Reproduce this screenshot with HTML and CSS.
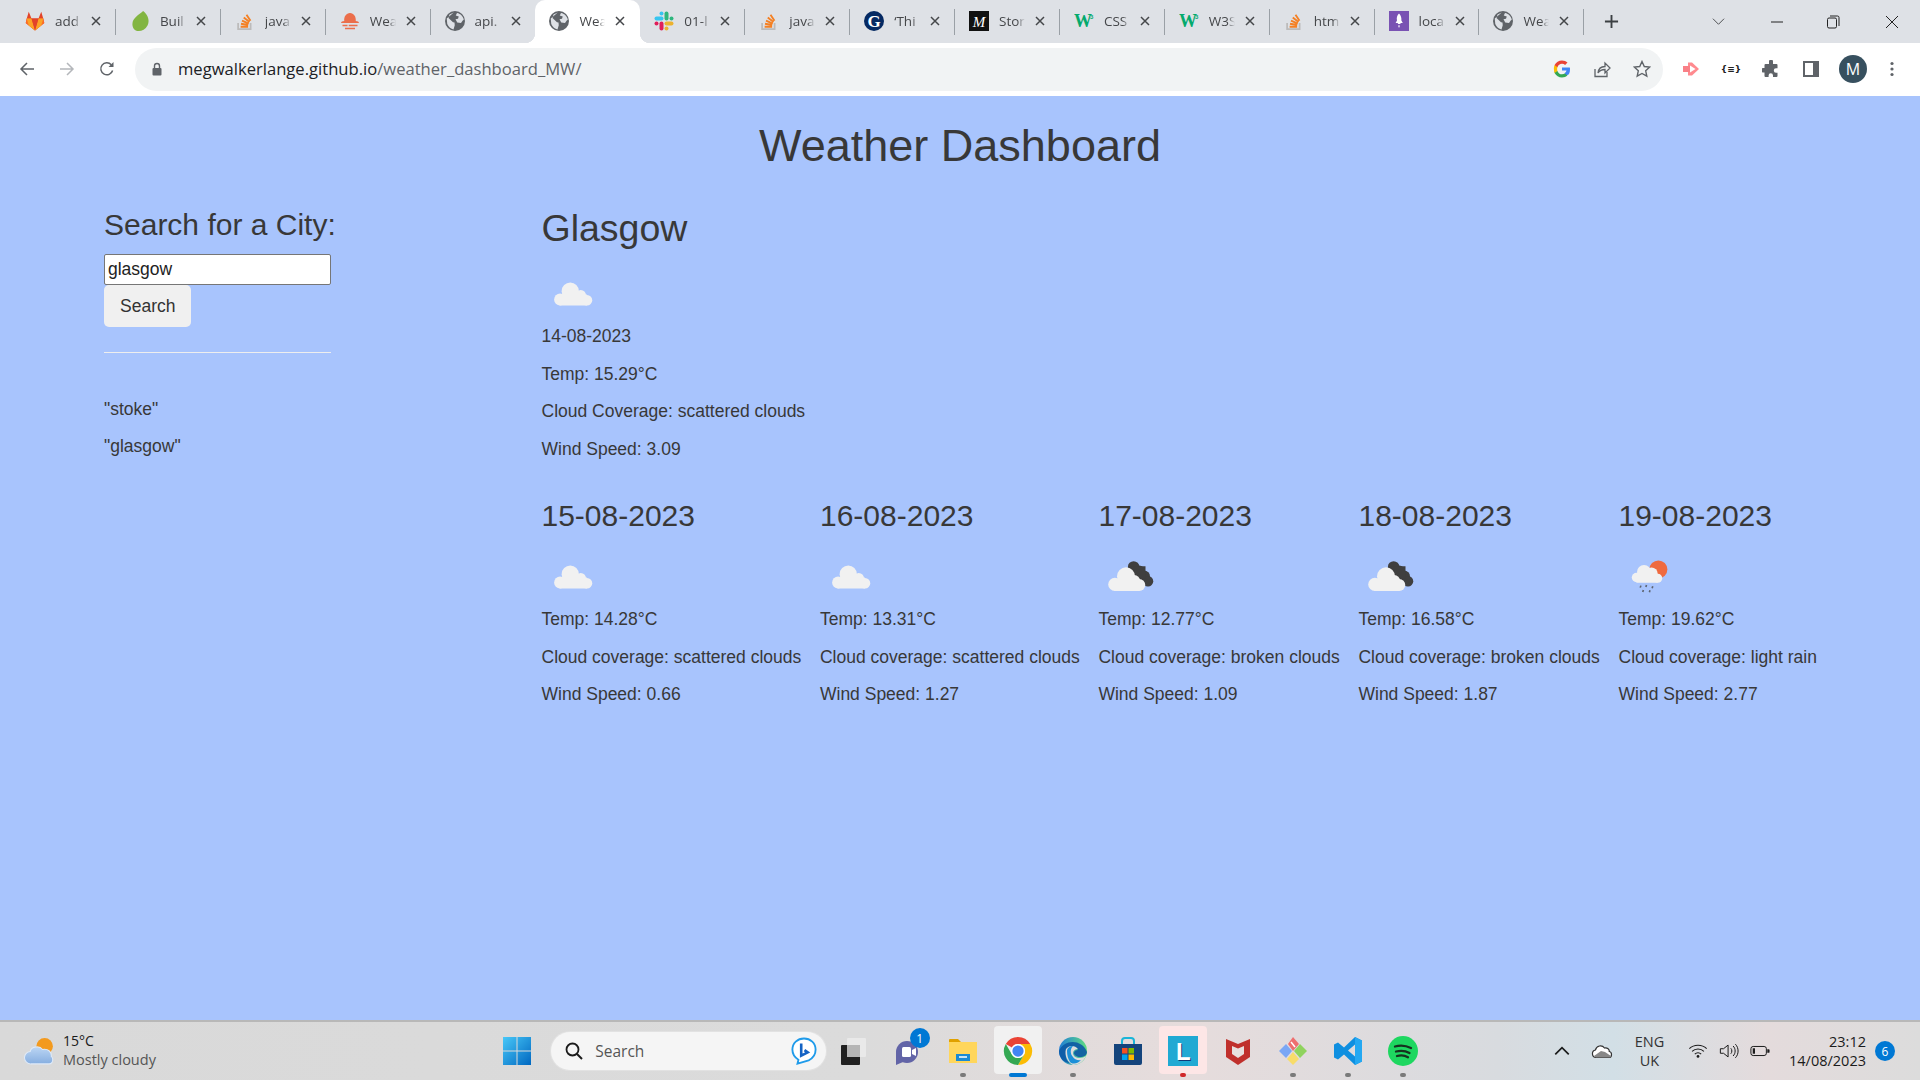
FILE: index.html
```html
<!DOCTYPE html>
<html lang="en">
<head>
  <meta charset="UTF-8">
  <title>Weather Dashboard</title>
  <link rel="stylesheet" href="styles.css">
</head>
<body>

  <!-- shared icons -->
  <svg class="defs" width="0" height="0">
    <symbol id="globe" viewBox="0 0 16 16">
      <circle cx="8" cy="8" r="8" fill="#5f6368"/>
      <path d="M7 1.2 3.6 2.8 2.8 5.6 6.4 9l1.2 .2 .2 2.2 -1 3.4c-2-.4-4-2-5-4.4L1.4 6zM9.6 1.6l-1 2 2.4 .8 -.6 1.8 -2 .4 1.4 2.6 3 .4 1.4-2 .8-.6C14.6 4.4 12.6 2.2 9.6 1.6z" fill="#dee1e6"/>
    </symbol>
    <symbol id="so" viewBox="0 0 16 16">
      <path d="M2.5 9.5v5h10v-5" fill="none" stroke="#bcbbbb" stroke-width="1.4"/>
      <path d="M4.5 12.6h6M4.8 10.2l5.8 1M5.6 7.7l5.4 2.4M7 5.2l4.6 3.6M9.2 3l3.2 4.8" fill="none" stroke="#f48024" stroke-width="1.5"/>
    </symbol>
    <symbol id="close" viewBox="0 0 10 10">
      <path d="M1 1l8 8M9 1l-8 8" stroke="#45474a" stroke-width="1.5" fill="none"/>
    </symbol>
    <symbol id="cloud" viewBox="0 0 50 50">
      <g fill="#f1f1f1">
        <circle cx="22.6" cy="23.3" r="6.9"/>
        <circle cx="31" cy="26.5" r="4.2"/>
        <circle cx="14.5" cy="30" r="4.8"/>
        <circle cx="36" cy="30.6" r="4.2"/>
        <rect x="14" y="26" width="22" height="8.8"/>
      </g>
    </symbol>
    <symbol id="broken" viewBox="0 0 50 50">
      <g fill="#3f3f3f">
        <circle cx="28.5" cy="17.5" r="4.6"/>
        <circle cx="33" cy="21" r="4.6"/>
        <circle cx="37" cy="25" r="4.6"/>
        <circle cx="40" cy="29" r="4.2"/>
        <rect x="26" y="17" width="12" height="10"/>
      </g>
      <g fill="#f1f1f1">
        <circle cx="22.4" cy="25" r="7.2"/>
        <circle cx="29" cy="28.6" r="4.6"/>
        <circle cx="13.5" cy="31.5" r="5.3"/>
        <circle cx="33" cy="32" r="4.8"/>
        <rect x="13" y="28" width="20" height="8.8"/>
      </g>
    </symbol>
    <symbol id="rain" viewBox="0 0 50 50">
      <circle cx="31.5" cy="19.5" r="7.2" fill="#ef6a3f"/>
      <g fill="#f1f1f1">
        <circle cx="20" cy="21.5" r="5.6"/>
        <circle cx="26" cy="23" r="5"/>
        <circle cx="14" cy="26" r="3.8"/>
        <circle cx="31" cy="26.6" r="3.6"/>
        <rect x="14" y="24" width="17" height="6.2"/>
      </g>
      <path d="M17.5 32.5l-.5 1.6M22 32l-.5 1.6M27 33l-.5 1.6M19.5 36l-.5 1.6M24.8 36.2l-.5 1.6" stroke="#5d6470" stroke-width="1.3" fill="none"/>
    </symbol>
  </svg>

  <div class="tabstrip">
    <div class="tab">
      <svg class="fav" viewBox="0 0 16 16"><path d="M8 15.5 .6 9.6 1.4 6 3 .6 5.2 6h5.6L13 .6 14.6 6l.8 3.6z" fill="#e24329"/><path d="M8 15.5 .6 9.6 1.4 6 5.2 6zM8 15.5l7.4-5.9L14.6 6l-3.8 0z" fill="#fc6d26"/><path d="M8 15.5 3 11.5 1.4 6 5.2 6zM8 15.5l5-4L14.6 6l-3.8 0z" fill="#fca326"/><path d="M8 15.5 5.2 6h5.6z" fill="#e24329"/></svg>
      <span class="tab-title">add</span><svg class="x"><use href="#close"/></svg>
    </div>
    <div class="tab">
      <svg class="fav" viewBox="0 0 16 16"><path d="M10.500 0c4 3 5.500 8 3.500 11.500-1.500 3-4.500 4.500-7 4.500-3.500 0-5.500-3-5-6.500C2.500 5.500 7 3 10.500 0z" fill="#82b541"/></svg>
      <span class="tab-title">Buil</span><svg class="x"><use href="#close"/></svg>
    </div>
    <div class="tab">
      <svg class="fav"><use href="#so"/></svg>
      <span class="tab-title">java</span><svg class="x"><use href="#close"/></svg>
    </div>
    <div class="tab">
      <svg class="fav" viewBox="0 0 16 16"><path d="M3.400 8C3 4.600 5 1.600 8 1.600s5 3 4.600 6.400c1.400 0 2.600 .6 2.600 1.600H.8c0-1 1.200-1.600 2.600-1.600zM2 11h4v1.200H2zM7 11h7v1.200H7zM4 13.400h8v1.200H4z" fill="#eb6e4b"/></svg>
      <span class="tab-title">Wea</span><svg class="x"><use href="#close"/></svg>
    </div>
    <div class="tab before-active">
      <svg class="fav"><use href="#globe"/></svg>
      <span class="tab-title">api.</span><svg class="x"><use href="#close"/></svg>
    </div>
    <div class="tab active">
      <svg class="fav"><use href="#globe"/></svg>
      <span class="tab-title">Wea</span><svg class="x"><use href="#close"/></svg>
    </div>
    <div class="tab">
      <svg class="fav" viewBox="0 0 16 16" fill="none" stroke-width="3.200" stroke-linecap="round"><path d="M6 6H2" stroke="#36c5f0"/><path d="M6 2v0" stroke="#36c5f0"/><path d="M10 6V2" stroke="#2eb67d"/><path d="M14 6v0" stroke="#2eb67d"/><path d="M10 10h4" stroke="#ecb22e"/><path d="M10 14v0" stroke="#ecb22e"/><path d="M6 10v4" stroke="#e01e5a"/><path d="M2 10v0" stroke="#e01e5a"/></svg>
      <span class="tab-title">01-l</span><svg class="x"><use href="#close"/></svg>
    </div>
    <div class="tab">
      <svg class="fav"><use href="#so"/></svg>
      <span class="tab-title">java</span><svg class="x"><use href="#close"/></svg>
    </div>
    <div class="tab">
      <svg class="fav" viewBox="0 0 20 20"><circle cx="10" cy="10" r="10" fill="#052962"/><text x="10" y="16" class="guardian-g">G</text></svg>
      <span class="tab-title">‘Thi</span><svg class="x"><use href="#close"/></svg>
    </div>
    <div class="tab">
      <svg class="fav" viewBox="0 0 20 20"><rect width="20" height="20" fill="#111"/><text x="10" y="15.500" class="medium-m">M</text></svg>
      <span class="tab-title">Stor</span><svg class="x"><use href="#close"/></svg>
    </div>
    <div class="tab">
      <svg class="fav" viewBox="0 0 20 16"><text x="0" y="14" class="w3-w">W</text><text x="16" y="6" class="w3-3">3</text></svg>
      <span class="tab-title">CSS</span><svg class="x"><use href="#close"/></svg>
    </div>
    <div class="tab">
      <svg class="fav" viewBox="0 0 20 16"><text x="0" y="14" class="w3-w">W</text><text x="16" y="6" class="w3-3">3</text></svg>
      <span class="tab-title">W3S</span><svg class="x"><use href="#close"/></svg>
    </div>
    <div class="tab">
      <svg class="fav"><use href="#so"/></svg>
      <span class="tab-title">htm</span><svg class="x"><use href="#close"/></svg>
    </div>
    <div class="tab">
      <svg class="fav" viewBox="0 0 20 20"><rect width="20" height="20" fill="#7952b3"/><path d="M10 2.500c2 1.800 2.600 4.400 2.400 7l1.400 2.400-2 0-.6 1H9.200l-.6-1-2 0L8 9.500C7.400 6.900 8 4.300 10 2.500z" fill="#fff"/><path d="M9 14.500h2l-1 2.600z" fill="#fff"/></svg>
      <span class="tab-title">loca</span><svg class="x"><use href="#close"/></svg>
    </div>
    <div class="tab">
      <svg class="fav"><use href="#globe"/></svg>
      <span class="tab-title">Wea</span><svg class="x"><use href="#close"/></svg>
    </div>
    <svg class="newtab" viewBox="0 0 16 16"><path d="M8 1v14M1 8h14" stroke="#3c4043" stroke-width="2" fill="none"/></svg>
    <div class="win-controls">
      <svg class="win-btn chevron" viewBox="0 0 14 14"><path d="M1 4l6 6 6-6" stroke="#45474a" fill="none"/></svg>
      <svg class="win-btn" viewBox="0 0 14 14"><path d="M1 7h12" stroke="#222" fill="none"/></svg>
      <svg class="win-btn" viewBox="0 0 14 14"><rect x="1.500" y="3" width="9" height="10" rx="1.500" stroke="#222" fill="none"/><path d="M4 1h7.500a1.500 1.500 0 0 1 1.500 1.500V11" stroke="#222" fill="none"/></svg>
      <svg class="win-btn win-close" viewBox="0 0 14 14"><path d="M1 1l12 12M13 1 1 13" stroke="#222" fill="none"/></svg>
    </div>
  </div>

  <div class="toolbar">
    <svg class="tool" viewBox="0 0 16 16"><path d="M15 8H2M8 2 2 8l6 6" stroke="#5f6368" stroke-width="1.500" fill="none"/></svg>
    <svg class="tool" viewBox="0 0 16 16"><path d="M1 8h13M8 2l6 6-6 6" stroke="#b4b7bb" stroke-width="1.500" fill="none"/></svg>
    <svg class="tool" viewBox="0 0 16 16"><path d="M13.600 9.500A6 6 0 1 1 12.300 3.800" stroke="#5f6368" stroke-width="1.500" fill="none"/><path d="M14.500 1v5h-5z" fill="#5f6368"/></svg>
    <div class="omnibox">
      <svg class="lock" viewBox="0 0 12 14"><path d="M3.500 6V4a2.500 2.500 0 0 1 5 0v2" stroke="#5f6368" stroke-width="1.400" fill="none"/><rect x="1.500" y="6" width="9" height="7.500" rx="1" fill="#5f6368"/></svg>
      <span class="url"><span class="host">megwalkerlange.github.io</span>/weather_dashboard_MW/</span>
      <svg class="omni-icon google" viewBox="0 0 18 18"><path d="M17 9.200c0-.6 0-1.100-.2-1.600H9v3h4.500c-.2 1-.8 1.900-1.700 2.500v2h2.700C16.100 14.700 17 12.200 17 9.200z" fill="#4285f4"/><path d="M9 17.500c2.200 0 4.100-.7 5.500-2l-2.700-2c-.8 .5-1.700 .8-2.800 .8-2.100 0-3.900-1.400-4.600-3.400H1.600V13C3 15.700 5.800 17.500 9 17.500z" fill="#34a853"/><path d="M4.400 10.900c-.4-1.200-.4-2.500 0-3.700V5H1.600c-1 2.100-1 4.800 0 8z" fill="#fbbc05"/><path d="M9 3.700c1.200 0 2.300 .4 3.100 1.200l2.400-2.400C13.100 1.200 11.200 .5 9 .5 5.800 .5 3 2.300 1.600 5l2.800 2.200C5.100 5.100 6.900 3.700 9 3.700z" fill="#ea4335"/></svg>
      <svg class="omni-icon" viewBox="0 0 18 18"><path d="M2 9v7.500h12V12" stroke="#5f6368" stroke-width="1.300" fill="none"/><path d="M5 13c.4-4 3.200-6.400 7-6.500V3l5 5-5 5V9.500c-3 0-5.400 1-7 3.500z" stroke="#5f6368" stroke-width="1.300" fill="none"/></svg>
      <svg class="omni-icon" viewBox="0 0 18 18"><path d="M9 1.500l2.300 5 5.400 .6-4 3.700 1.100 5.400L9 13.500l-4.800 2.700 1.100-5.400-4-3.700 5.400-.6z" stroke="#5f6368" stroke-width="1.400" fill="none"/></svg>
    </div>
    <div class="ext-icons">
      <svg class="ext" viewBox="0 0 18 18"><path d="M6 2.500h4L17 9l-7 6.500H6z" fill="#ff8a8f"/><path d="M8 5.500 13.500 9 8 12.500z" fill="#fff"/><rect x="1" y="6" width="7" height="6" fill="#f98087"/></svg>
      <span class="ext ext-code">{≡}</span>
      <svg class="ext" viewBox="0 0 18 18"><path d="M7 1.500a2 2 0 0 1 4 0V4h3.500a1 1 0 0 1 1 1v3.300H14a2.200 2.200 0 0 0 0 4.400h1.500V16a1 1 0 0 1-1 1H11v-1.500a2.200 2.200 0 0 0-4.400 0V17H3.500a1 1 0 0 1-1-1v-3.500H1a2.200 2.200 0 0 1 0-4.400h1.500V5a1 1 0 0 1 1-1H7z" fill="#5f6368"/></svg>
      <svg class="ext" viewBox="0 0 18 18"><path d="M1 1h16v16H1zM3 3v12h8V3z" fill="#5f6368" fill-rule="evenodd"/></svg>
      <span class="avatar">M</span>
      <svg class="ext" viewBox="0 0 18 18"><g fill="#5f6368"><circle cx="9" cy="3.500" r="1.600"/><circle cx="9" cy="9" r="1.600"/><circle cx="9" cy="14.500" r="1.600"/></g></svg>
    </div>
  </div>

  <main class="page">
    <h1 class="page-title">Weather Dashboard</h1>
    <div class="row">
      <aside class="sidebar">
        <h3>Search for a City:</h3>
        <input class="city-input" type="text" value="glasgow">
        <button class="search-btn">Search</button>
        <hr>
        <div class="history">
          <p>"stoke"</p>
          <p>"glasgow"</p>
        </div>
      </aside>
      <section class="results">
        <h2>Glasgow</h2>
        <svg class="wx"><use href="#cloud"/></svg>
        <p>14-08-2023</p>
        <p>Temp: 15.29°C</p>
        <p>Cloud Coverage: scattered clouds</p>
        <p>Wind Speed: 3.09</p>
        <div class="forecast">
          <div class="day">
            <h3>15-08-2023</h3>
            <svg class="wx"><use href="#cloud"/></svg>
            <p>Temp: 14.28°C</p>
            <p>Cloud coverage: scattered clouds</p>
            <p>Wind Speed: 0.66</p>
          </div>
          <div class="day">
            <h3>16-08-2023</h3>
            <svg class="wx"><use href="#cloud"/></svg>
            <p>Temp: 13.31°C</p>
            <p>Cloud coverage: scattered clouds</p>
            <p>Wind Speed: 1.27</p>
          </div>
          <div class="day">
            <h3>17-08-2023</h3>
            <svg class="wx"><use href="#broken"/></svg>
            <p>Temp: 12.77°C</p>
            <p>Cloud coverage: broken clouds</p>
            <p>Wind Speed: 1.09</p>
          </div>
          <div class="day">
            <h3>18-08-2023</h3>
            <svg class="wx"><use href="#broken"/></svg>
            <p>Temp: 16.58°C</p>
            <p>Cloud coverage: broken clouds</p>
            <p>Wind Speed: 1.87</p>
          </div>
          <div class="day">
            <h3>19-08-2023</h3>
            <svg class="wx"><use href="#rain"/></svg>
            <p>Temp: 19.62°C</p>
            <p>Cloud coverage: light rain</p>
            <p>Wind Speed: 2.77</p>
          </div>
        </div>
      </section>
    </div>
  </main>

  <footer class="taskbar">
    <div class="tb-weather">
      <svg class="tb-weather-icon" viewBox="0 0 32 28">
        <defs>
          <linearGradient id="cloudGrad" x1="0" y1="0" x2="0" y2="1"><stop offset="0" stop-color="#bcd6f4"/><stop offset="1" stop-color="#86aee0"/></linearGradient>
        </defs>
        <circle cx="20" cy="9" r="8" fill="#f39a1e"/>
        <path d="M7 26a6 6 0 0 1-1-12c1-5 9-6 12-2 5-1 9 2 8.500 7 2 1 2 7-2 7z" fill="url(#cloudGrad)" stroke="#dfeaf8"/>
      </svg>
      <div>
        <div class="tb-temp">15°C</div>
        <div class="tb-cond">Mostly cloudy</div>
      </div>
    </div>

    <div class="tb-center">
      <div class="app app-start">
        <svg class="app-icon" viewBox="0 0 30 30">
          <defs><linearGradient id="winGrad" x1="0" y1="0" x2="1" y2="1"><stop offset="0" stop-color="#48c8f8"/><stop offset="1" stop-color="#0067c0"/></linearGradient></defs>
          <path d="M1 1h13.500v13.500H1zM15.500 1H29v13.500H15.500zM1 15.500h13.500V29H1zM15.500 15.500H29V29H15.500z" fill="url(#winGrad)"/>
        </svg>
      </div>
      <div class="tb-search">
        <svg class="tb-search-icon" viewBox="0 0 18 18"><circle cx="7.500" cy="7.500" r="6" stroke="#1b1b1b" stroke-width="1.800" fill="none"/><path d="M12 12l5 5" stroke="#1b1b1b" stroke-width="2"/></svg>
        <span class="tb-search-text">Search</span>
        <svg class="tb-bing" viewBox="0 0 28 30"><path d="M14 1.500c7 0 12.500 5 12.500 12 0 5-3 9.500-7.500 11.500l-12 3.500 1-4C4 22 1.500 18 1.500 13.500 1.500 6.500 7 1.500 14 1.500z" fill="#fff" stroke="#1f9bea" stroke-width="2"/><path d="M11 7v13l7-3.500-3.500-2.500" fill="none" stroke="#1463c4" stroke-width="2.800"/></svg>
      </div>
      <div class="app">
        <svg class="app-icon" viewBox="0 0 30 30"><rect x="3" y="9" width="19" height="20" rx="1" fill="#202020"/><rect x="9" y="2" width="19" height="19" rx="1" fill="#e9e9e9"/><rect x="9" y="9" width="13" height="12" fill="#b5b5b5"/></svg>
      </div>
      <div class="app">
        <svg class="app-icon" viewBox="0 0 30 30"><circle cx="14" cy="16" r="11" fill="#6264a7"/><path d="M3 16v13l7-3z" fill="#6264a7"/><rect x="9" y="11" width="9" height="10" rx="1.500" fill="#fff"/><path d="M19 14l4-2v8l-4-2z" fill="#fff"/></svg>
        <span class="badge teams-badge">1</span>
      </div>
      <div class="app">
        <svg class="app-icon" viewBox="0 0 30 30"><path d="M1 4a1 1 0 0 1 1-1h8l3 3h-12z" fill="#e0a100"/><path d="M1 6h28v21H1z" fill="#ffd65c"/><path d="M8 18h14v7H8z" fill="#1a8ad4"/><path d="M11 21h8" stroke="#fff" stroke-width="1.500"/></svg>
        <span class="dot"></span>
      </div>
      <div class="app">
        <span class="tile tile-grey"></span>
        <svg class="app-icon" viewBox="0 0 32 32"><path d="M3 8.500A15 15 0 0 1 29 8.500L16 8.500A7.500 7.500 0 0 0 9.500 12.200z" fill="#ea4335"/><path d="M29 8.500A15 15 0 0 1 16 31L22.500 19.750A7.500 7.500 0 0 0 16 8.500z" fill="#fbbc05"/><path d="M16 31A15 15 0 0 1 3 8.500L9.500 19.750A7.500 7.500 0 0 0 22.500 19.750z" fill="#34a853"/><circle cx="16" cy="16" r="7.500" fill="#fff"/><circle cx="16" cy="16" r="6" fill="#4285f4"/></svg>
        <span class="dot dot-long"></span>
      </div>
      <div class="app">
        <svg class="app-icon" viewBox="0 0 30 30">
          <defs><linearGradient id="edgeGrad" x1="0" y1="0" x2="1" y2="0"><stop offset="0" stop-color="#1f7fd8"/><stop offset="1" stop-color="#5fdc80"/></linearGradient></defs>
          <circle cx="15" cy="15" r="14" fill="url(#edgeGrad)"/>
          <path d="M29 16c0 3-3 5-7 5-3 0-6-2-6-4s2-3 4-3c-2-3-8-3-11 1-2 3-2 9 3 12C6 27 1 22 1 15 6 3 24 3 29 16z" fill="#0c59a4" opacity=".9"/>
          <path d="M8 13c3-4 9-4 12 0-3 0-5 2-5 4 0 3 3 5 7 5 2 0 4-1 6-2-2 5-7 9-13 9-5-2-9-10-7-16z" fill="#dcdcdc"/>
          <path d="M9 15c0-3 3-5 6-5-3 3-3 8 0 11 1 2 5 4 8 3-2 3-8 5-11 2-2-3-3-7-3-11z" fill="#1b8fd8"/>
        </svg>
        <span class="dot"></span>
      </div>
      <div class="app">
        <svg class="app-icon" viewBox="0 0 30 30"><path d="M9 9V5a3 3 0 0 1 3-3h6a3 3 0 0 1 3 3v4" stroke="#19b5d8" stroke-width="2" fill="none"/><path d="M1 8h28v19a2 2 0 0 1-2 2H3a2 2 0 0 1-2-2z" fill="#14447c"/><rect x="9" y="12" width="5.500" height="5.500" fill="#f25022"/><rect x="15.500" y="12" width="5.500" height="5.500" fill="#7fba00"/><rect x="9" y="18.500" width="5.500" height="5.500" fill="#00a4ef"/><rect x="15.500" y="18.500" width="5.500" height="5.500" fill="#ffb900"/></svg>
      </div>
      <div class="app">
        <span class="tile tile-pink"></span>
        <svg class="app-icon" viewBox="0 0 30 30"><rect width="30" height="30" fill="#21a9d3"/><text x="9" y="25" class="l-shadow">L</text><text x="8" y="24" class="l-letter">L</text></svg>
        <span class="dot dot-red"></span>
      </div>
      <div class="app">
        <svg class="app-icon" viewBox="0 0 30 30"><path d="M3 3l12 5 12-5v18l-12 8-12-8z" fill="#c0302c"/><path d="M9 10l6 2.500 6-2.500v8l-6 4-6-4z" fill="#e8e0de"/></svg>
      </div>
      <div class="app">
        <svg class="app-icon" viewBox="0 0 30 30"><path d="M15 1l6 7-6 7-5-7z" fill="#ee6f6f"/><path d="M8 8l6 7-6 7-7-7z" fill="#7aa7f5"/><path d="M22 8l7 7-7 7-6-7z" fill="#90d35e"/><path d="M15 16l6 7-6 6-6-6z" fill="#f8dc6a"/><path d="M13 6l4 5" stroke="#fff" stroke-width="1.500"/></svg>
        <span class="dot"></span>
      </div>
      <div class="app">
        <svg class="app-icon" viewBox="0 0 30 30"><path d="M22 1l7 3.500v21L22 29 11 18.500l-6 5L1 21.500v-13L5 6.500l6 5zM22 8.500l-7 6 7 6z" fill="#0f8fe0" fill-rule="evenodd"/><path d="M22 1l7 3.500v21L22 29z" fill="#24a8f2"/></svg>
        <span class="dot"></span>
      </div>
      <div class="app">
        <svg class="app-icon" viewBox="0 0 30 30"><circle cx="15" cy="15" r="15" fill="#1ed760"/><path d="M7 10.500c5-1.500 11-1 16 1.500M8 15.500c4.500-1.200 9.500-.8 13.500 1.500M9 20c3.500-1 8-.6 11 1.200" stroke="#16321f" stroke-width="2.300" stroke-linecap="round" fill="none"/></svg>
        <span class="dot"></span>
      </div>
    </div>

    <div class="tb-tray">
      <svg class="tray-icon tray-up" viewBox="0 0 16 16"><path d="M2 11l6-6 6 6" stroke="#1b1b1b" stroke-width="1.500" fill="none"/></svg>
      <svg class="tray-icon tray-drive" viewBox="0 0 22 16"><path d="M5 14.500a3.800 3.800 0 0 1-.6-7.500C5.500 2.500 11 1.500 13.500 5c3-.5 5 1.500 4.800 3.500 3 .5 3 6 -.3 6z" fill="#fff" stroke="#333" stroke-width="1.200"/><path d="M3 13l7-5 4 1 6 4-1 1.500H5z" fill="#888"/></svg>
      <div class="tray-lang">ENG<br>UK</div>
      <svg class="tray-icon" viewBox="0 0 22 18"><path d="M1.500 6.500c5-5 14-5 19 0M4.500 9.500c3.500-3.500 9.500-3.500 13 0M7.500 12.500c2-2 5-2 7 0" stroke="#1b1b1b" stroke-width="1.200" fill="none"/><circle cx="11" cy="15" r="1.500" fill="#1b1b1b"/></svg>
      <svg class="tray-icon" viewBox="0 0 22 18"><path d="M1.500 6.500h3.500L10 2.500v13L5 11.500H1.500z" stroke="#1b1b1b" stroke-width="1.100" fill="none"/><path d="M13 6c1.500 1.500 1.500 4.500 0 6M15.500 3.500c3 3 3 8 0 11M18 1.500c4 4 4 11 0 15" stroke="#1b1b1b" stroke-width="1.100" fill="none"/></svg>
      <svg class="tray-icon" viewBox="0 0 22 14"><rect x="1" y="2" width="17" height="10" rx="2.500" stroke="#1b1b1b" stroke-width="1.100" fill="none"/><rect x="3" y="4" width="2.500" height="6" fill="#1b1b1b"/><path d="M19 5h1.500a1 1 0 0 1 1 1v2a1 1 0 0 1-1 1H19z" fill="#1b1b1b"/></svg>
      <div class="tray-clock">23:12<br>14/08/2023</div>
      <span class="badge notif-badge">6</span>
    </div>
  </footer>

</body>
</html>
```

FILE: styles.css
```css
* { box-sizing: border-box; }
html, body { height: 100%; }
body { margin: 0; display: flex; flex-direction: column; height: 1080px; overflow: hidden; font-family: "Liberation Sans", Arial, sans-serif; font-size: 17.5px; line-height: 25px; color: #383838; background: #a8c4fd; }
.defs { position: absolute; }

/* browser tabs */
.tabstrip { display: flex; align-items: center; height: 43px; padding-left: 11px; background: #dee1e6; flex: none; }
.tab { position: relative; display: flex; align-items: center; width: 104.9px; height: 43px; padding: 0 0 2px 14px; flex: none; background: linear-gradient(#9aa0a6, #9aa0a6) right 9px / 1px 26px no-repeat; }
.tab.before-active { background: none; }
.tab.active { background: #fff; border-radius: 10px 10px 0 0; }
.tab.active::before, .tab.active::after { content: ""; position: absolute; bottom: 0; width: 10px; height: 10px; }
.tab.active::before { left: -10px; background: radial-gradient(circle at 0 0, #dee1e6 10px, #fff 10.5px); }
.tab.active::after { right: -10px; background: radial-gradient(circle at 100% 0, #dee1e6 10px, #fff 10.5px); }
.fav { width: 20px; height: 20px; flex: none; }
.tab-title { width: 26px; margin-left: 10px; white-space: nowrap; font: 13.5px/18px "Open Sans", sans-serif; color: #45474a; -webkit-mask-image: linear-gradient(90deg, #000 70%, transparent); mask-image: linear-gradient(90deg, #000 70%, transparent); }
.x { width: 10px; height: 10px; margin-left: 10px; flex: none; }
.w3-w { font: bold 18px "Liberation Serif", serif; fill: #04aa6d; }
.w3-3 { font: bold 6px "Liberation Sans", sans-serif; fill: #04aa6d; }
.guardian-g { font: bold 17px "Liberation Serif", serif; fill: #fff; text-anchor: middle; }
.medium-m { font: italic 15px "Liberation Serif", serif; fill: #fff; text-anchor: middle; }
.newtab { width: 15px; height: 15px; margin-left: 20px; flex: none; }
.win-controls { display: flex; align-items: center; margin-left: auto; padding-right: 21px; }
.win-btn { width: 14px; height: 14px; margin-left: 42px; }
.win-btn.win-close { margin-left: 45px; }
.win-btn.chevron { margin-left: 0; width: 13px; height: 13px; margin-right: 3px; }

/* browser toolbar */
.toolbar { display: flex; align-items: center; height: 53px; padding: 0 19px 1px 19px; background: #fff; flex: none; }
.tool { width: 16px; height: 16px; margin-right: 24px; flex: none; }
.omnibox { display: flex; align-items: center; width: 1528px; height: 43px; margin-left: -4px; padding: 0 12px 0 16px; background: #f1f3f4; border-radius: 22px; flex: none; }
.lock { width: 12px; height: 14px; flex: none; }
.url { margin-left: 15px; margin-right: auto; font: 16.6px/20px "Open Sans", sans-serif; color: #5f6368; white-space: nowrap; }
.host { color: #202124; }
.omni-icon { width: 18px; height: 18px; margin-left: 22px; flex: none; }
.ext-icons { display: flex; align-items: center; margin-left: 19px; }
.ext { width: 18px; height: 18px; margin-right: 22px; flex: none; }
.ext-code { display: flex; justify-content: center; font: bold 9px/18px "DejaVu Sans", sans-serif; color: #222; white-space: nowrap; }
.avatar { display: flex; align-items: center; justify-content: center; width: 28px; height: 28px; margin: 0 16px 0 -3px; border-radius: 50%; background: #37505f; color: #fff; font: 16px "Open Sans", sans-serif; flex: none; }

/* the dashboard */
.page { flex: 1; min-height: 0; }
.page-title { margin: 25px 0 12.5px; font-size: 45px; font-weight: 400; line-height: 49.5px; text-align: center; }
.row { display: flex; }
.sidebar { width: 541.5px; padding-left: 104px; flex: none; }
h2, h3 { margin: 25px 0 12.5px; font-weight: 400; }
h2 { font-size: 37.5px; line-height: 41.25px; }
h3 { font-size: 30px; line-height: 33px; }
p { margin: 0 0 12.5px; }
.city-input { display: block; width: 227px; height: 31px; padding: 1px 3px; border: 1px solid #767676; border-radius: 2px; font: 17.5px "Liberation Sans", sans-serif; color: #222; background: #fff; }
.search-btn { display: block; height: 42.5px; padding: 1px 16px 0; border: none; border-radius: 5px; background: #f0f0f0; color: #333; font: 17.5px "Liberation Sans", sans-serif; }
hr { width: 227px; margin: 24.5px 0 0; border: none; border-top: 1.5px solid #eee; }
.history { margin-top: 44px; }
.wx { display: block; width: 62.5px; height: 62.5px; }
.forecast { display: flex; gap: 18.75px; }
.day { flex: none; }

/* windows taskbar */
.taskbar { display: grid; grid-template-columns: 1fr auto 1fr; align-items: center; height: 60px; flex: none; border-top: 2px solid #b8b8b8; background: linear-gradient(90deg, #d9d9d9 0, #dbdbdb 45%, #e6dcdc 62%, #d8dbdf 78%, #d2dfe6 84%, #e4dbdc 92%, #dcdcdc 100%); font-family: "Open Sans", sans-serif; }
.tb-weather { display: flex; align-items: center; padding-left: 24px; }
.tb-weather-icon { width: 33px; height: 29px; margin-right: 6px; flex: none; }
.tb-temp { margin-top: -3px; font-size: 14px; line-height: 19px; color: #1a1a1a; }
.tb-cond { font-size: 14.5px; line-height: 19px; color: #555; }
.tb-center { display: flex; align-items: center; height: 58px; }
.app { position: relative; display: flex; align-items: center; justify-content: center; width: 55px; height: 58px; flex: none; }
.app.app-start { margin-right: 2px; }
.app-icon { position: relative; width: 30px; height: 30px; flex: none; }
.tb-search { display: flex; align-items: center; width: 274.5px; height: 38px; margin-left: 5px; padding: 0 9px 0 14px; border-radius: 19px; background: #f5f5f5; box-shadow: 0 0 0 1px #e2e2e2; }
.tb-search-icon { width: 18px; height: 18px; flex: none; }
.tb-search-text { margin-left: 12px; margin-right: auto; font-size: 15.5px; color: #555; }
.tb-bing { width: 26px; height: 28px; flex: none; }
.tile { position: absolute; top: 4px; left: 3.5px; width: 48px; height: 48px; border-radius: 4px; }
.tile-grey { background: #f1f1f1; }
.tile-pink { background: #fde6e6; }
.l-letter { font: bold 24px "Liberation Sans", sans-serif; fill: #fff; }
.l-shadow { font: bold 24px "Liberation Sans", sans-serif; fill: #123a78; }
.dot { position: absolute; bottom: 3px; left: 24.5px; width: 6px; height: 4px; border-radius: 2px; background: #7a7a7a; }
.dot-long { left: 18.5px; width: 18px; background: #0078d4; }
.dot-red { background: #d0282a; }
.badge { display: flex; align-items: center; justify-content: center; border-radius: 50%; background: #0078d4; color: #fff; flex: none; }
.teams-badge { position: absolute; top: 6px; right: 6px; width: 20px; height: 20px; font-size: 12px; }
.tb-tray { display: flex; align-items: center; justify-content: flex-end; padding-right: 25px; color: #1b1b1b; font-size: 14.5px; line-height: 19px; }
.tray-icon { width: 20px; height: 18px; flex: none; margin-right: 11px; }
.tray-drive { width: 22px; height: 16px; margin: 0 18.5px 0 8px; }
.tray-lang { width: 36px; margin-right: 20.5px; text-align: center; color: #333; }
.tray-clock { margin: 0 9px 0 8px; text-align: right; }
.notif-badge { width: 20px; height: 20px; font-size: 12px; }
```
